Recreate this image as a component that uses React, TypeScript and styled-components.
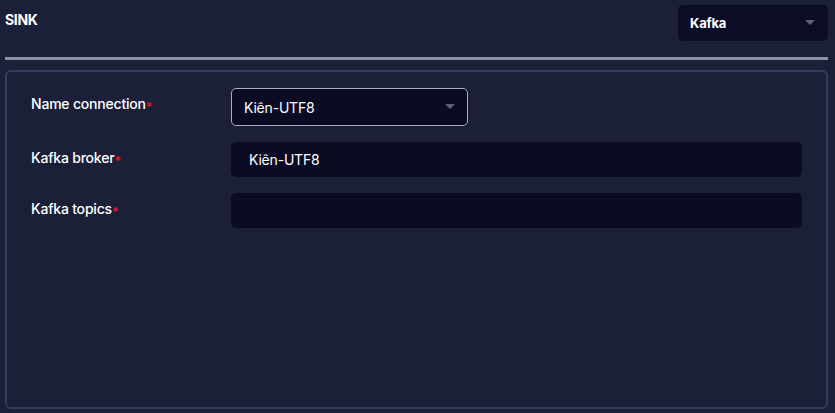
import styled, { createGlobalStyle } from "styled-components";

const GlobalStyle = createGlobalStyle`
    html, body {
        margin: 0;
        padding: 0;
        background: #1b1f38;
    }
    body {
        font-family: Inter, "Noto Sans", sans-serif;
        color: #ffffff;
    }
`;

type FieldPropsType = {
    label: string
    value?: string
    select?: boolean
}

const Caret = () => (
    <svg width="10" height="6" viewBox="0 0 10 6">
        <path d="M0 0 L10 0 L5 5 Z" fill="#5b5f78" />
    </svg>
);

const Field = (props: FieldPropsType) => {
    return (
        <Row>
            <Label>
                {props.label}
                <Required>*</Required>
            </Label>
            {props.select ? (
                <SelectBox>
                    <span>{props.value}</span>
                    <Caret />
                </SelectBox>
            ) : (
                <Input>{props.value}</Input>
            )}
        </Row>
    );
};

export default function App() {
    return (
        <>
            <GlobalStyle />
            <Page>
                <Header>
                    <Title>SINK</Title>
                    <TypeSelect>
                        <span>Kafka</span>
                        <Caret />
                    </TypeSelect>
                </Header>
                <Divider />
                <Panel>
                    <Field label="Name connection" value="Kiên-UTF8" select />
                    <Field label="Kafka broker" value="Kiên-UTF8" />
                    <Field label="Kafka topics" />
                </Panel>
            </Page>
        </>
    );
}

const Page = styled.div`
    width: 835px;
    height: 413px;
    padding: 5px 7px 0 5px;
    box-sizing: border-box;
    display: flex;
    flex-direction: column;
`;

const Header = styled.div`
    display: flex;
    justify-content: space-between;
    align-items: flex-start;
    height: 36px;
`;

const Title = styled.h3`
    margin: 7px 0 0;
    font-size: 14px;
    font-weight: 700;
    line-height: 16px;
    letter-spacing: -0.3px;
`;

const TypeSelect = styled.div`
    width: 150px;
    height: 36px;
    box-sizing: border-box;
    background: #0b0c25;
    border-radius: 5px;
    padding: 0 13px 0 12px;
    display: flex;
    align-items: center;
    justify-content: space-between;
    font-size: 13px;
    font-weight: 700;
    letter-spacing: -0.2px;
`;

const Divider = styled.div`
    height: 3px;
    margin-top: 16px;
    background: #8d90a8;
`;

const Panel = styled.div`
    margin-top: 10px;
    height: 339px;
    box-sizing: border-box;
    border: 2px solid #353b5a;
    border-radius: 6px;
    padding: 16px 24px 0 24px;
    display: flex;
    flex-direction: column;
    gap: 16px;
`;

const Row = styled.div`
    display: grid;
    grid-template-columns: 200px 1fr;
    align-items: start;
`;

const Label = styled.label`
    font-size: 14px;
    font-weight: 500;
    line-height: 17px;
    padding-top: 7px;
    letter-spacing: -0.2px;
`;

const Required = styled.span`
    color: #e5162b;
    font-size: 12px;
    font-weight: 700;
    vertical-align: -2px;
`;

const SelectBox = styled.div`
    width: 237px;
    height: 38px;
    box-sizing: border-box;
    background: #0b0c24;
    border: 1px solid #a9adc4;
    border-radius: 5px;
    padding: 0 12px 0 12px;
    display: flex;
    align-items: center;
    justify-content: space-between;
    font-size: 14px;
    letter-spacing: -0.2px;
`;

const Input = styled.div`
    height: 35px;
    box-sizing: border-box;
    background: #0b0c24;
    border-radius: 5px;
    padding: 0 18px;
    display: flex;
    align-items: center;
    font-size: 14px;
    letter-spacing: -0.2px;
`;
